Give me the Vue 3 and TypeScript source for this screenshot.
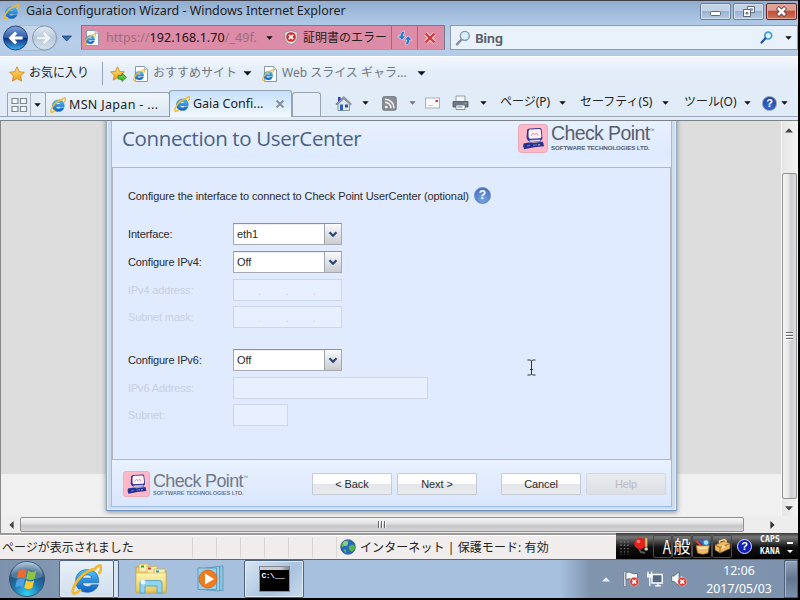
<script setup lang="ts">
import { ref } from 'vue'

interface Field {
  label: string
  kind: 'select' | 'ip' | 'text'
  value: string
  disabled: boolean
  size: string
}

const ipv4Fields = ref<Field[]>([
  { label: 'Interface:', kind: 'select', value: 'eth1', disabled: false, size: 'mid' },
  { label: 'Configure IPv4:', kind: 'select', value: 'Off', disabled: false, size: 'mid' },
  { label: 'IPv4 address:', kind: 'ip', value: '', disabled: true, size: 'mid' },
  { label: 'Subnet mask:', kind: 'ip', value: '', disabled: true, size: 'mid' },
])
const ipv6Fields = ref<Field[]>([
  { label: 'Configure IPv6:', kind: 'select', value: 'Off', disabled: false, size: 'mid' },
  { label: 'IPv6 Address:', kind: 'text', value: '', disabled: true, size: 'wide' },
  { label: 'Subnet:', kind: 'text', value: '', disabled: true, size: 'small' },
])
const groups = [ipv4Fields, ipv6Fields]
const zones = [0, 1, 2, 3, 4, 5]
</script>

<template>
  <div class="screen">
    <svg class="defs" width="0" height="0">
      <defs>
        <linearGradient id="gBlue" x1="0" y1="0" x2="0" y2="1">
          <stop offset="0" stop-color="#4fc0f5" /><stop offset="1" stop-color="#0f5fc0" />
        </linearGradient>
        <linearGradient id="gNav" x1="0" y1="0" x2="0" y2="1">
          <stop offset="0" stop-color="#7fa5d9" /><stop offset=".48" stop-color="#2e5cae" />
          <stop offset=".5" stop-color="#0b2c80" /><stop offset="1" stop-color="#3fb0ee" />
        </linearGradient>
        <linearGradient id="gFwd" x1="0" y1="0" x2="0" y2="1">
          <stop offset="0" stop-color="#e2ebf4" /><stop offset=".5" stop-color="#b9c9dc" />
          <stop offset="1" stop-color="#d6e2ee" />
        </linearGradient>
        <linearGradient id="gStar" x1="0" y1="0" x2="0" y2="1">
          <stop offset="0" stop-color="#ffe679" /><stop offset="1" stop-color="#f59a1a" />
        </linearGradient>
        <radialGradient id="gOrb" cx=".5" cy=".95" r=".9">
          <stop offset="0" stop-color="#35d3f5" /><stop offset=".45" stop-color="#1b78ae" />
          <stop offset=".75" stop-color="#28537f" /><stop offset="1" stop-color="#8fb2cc" />
        </radialGradient>
        <linearGradient id="gFolder" x1="0" y1="0" x2="0" y2="1">
          <stop offset="0" stop-color="#fdf3b0" /><stop offset="1" stop-color="#e8c95c" />
        </linearGradient>
      </defs>
      <symbol id="ie" viewBox="0 0 16 16">
        <path d="M14.300 9.700H6c.1 1.300 1 2 2.400 2 1 0 1.700-.4 2.200-1h3.500c-.9 2.500-3 3.900-5.700 3.900-3.700 0-6-2.300-6-5.800 0-3.600 2.400-5.900 6-5.900 4 0 6.200 2.700 5.900 6.800zM10.700 7.300C10.500 6.200 9.600 5.600 8.300 5.600s-2.100.6-2.400 1.700z" fill="url(#gBlue)" stroke="#0d58a8" stroke-width=".3" />
        <path d="M12.200 2.700C13.500.9 15.200.2 15.500 1.200c.3.900-.1 2.200-.9 3.500M12.200 2.500C8.200 3 3.400 7.300 1.500 11.800c-1 2.300-.7 3.600.4 3.400 1-.1 2-.9 2.800-1.600" fill="none" stroke="#f3b92c" stroke-width="1.400" stroke-linecap="round" />
      </symbol>
      <symbol id="page" viewBox="0 0 16 16">
        <path d="M2.500.5h9l3 3v12h-12z" fill="#fbfdff" stroke="#8b98a8" />
        <path d="M11.500.5v3h3" fill="#dbe4ed" stroke="#9aa6b4" stroke-width=".7" />
        <use href="#ie" x="0" y="3" width="12" height="12" />
      </symbol>
      <symbol id="star" viewBox="0 0 16 16">
        <path d="M8 .8l2.200 4.900 5.200.6-3.900 3.600 1.100 5.200L8 12.500l-4.600 2.600 1.100-5.200L.6 6.300l5.200-.6z" fill="url(#gStar)" stroke="#cf8a1c" stroke-width=".9" stroke-linejoin="round" />
      </symbol>
      <symbol id="down" viewBox="0 0 8 5"><path d="M0 .3h8L4 4.600z" fill="currentColor" /></symbol>
      <symbol id="badge" viewBox="0 0 8 8">
        <circle cx="4" cy="4" r="3.800" fill="#e23a32" stroke="#f8c6c0" stroke-width=".5" />
        <path d="M2.400 2.400l3.200 3.200M5.600 2.400L2.400 5.600" stroke="#fff" stroke-width="1.300" />
      </symbol>
      <symbol id="cp" viewBox="0 0 30 30">
        <rect x=".5" y=".5" width="29" height="28" rx="3" fill="#ffb8c8" stroke="#e5a9b6" />
        <path d="M9 6.500Q9 4.500 12 4.500L22 4q1.500 0 1.600 1.500L24.500 14q0 2-2 2.200L12 17q-2.500 0-2.700-1.500L8.500 14z" fill="#2c3599" />
        <path d="M10.500 7.500Q11 5 13.300 5.400l8.200-.5q1 0 1.200 1L23.500 12.500q0 1.700-1.500 1.800L12.800 14.800q-2 0-2.200-1.500z" fill="#fff3fa" />
        <path d="M13 12l2-3 1.500 2 2-2.200 1.500 3" fill="none" stroke="#d77da0" stroke-width=".8" />
        <path d="M11 16l11-.7 1 2-11 1z" fill="#ebe6f8" stroke="#2c3599" stroke-width=".6" />
        <path d="M5.500 19.500l5-1 5 .6 9.500-1.400 1 4.500-10 1-10 2q-1.500-3-.5-5.700z" fill="#253093" />
        <path d="M9 22l3-.5M15 21.300l4-.5" stroke="#8f9bd8" stroke-width=".8" />
        <path d="M20 21l2-.3" stroke="#e8d37b" />
      </symbol>
    </svg>

    <header class="titlebar">
      <svg class="i16"><use href="#ie" /></svg>
      <span class="title-text">Gaia Configuration Wizard - Windows Internet Explorer</span>
      <div class="winbtns">
        <button class="wb"><svg width="29" height="15"><rect x="9.500" y="7.500" width="10" height="4" rx="1" fill="#fff" stroke="#5c6b80" /></svg></button>
        <button class="wb"><svg width="29" height="15"><path d="M13.500 2.500h7v6h-7z" fill="#fff" stroke="#5c6b80" /><path d="M16 4.800h2.500v1.500H16z" fill="#a9bcd5" stroke="#5c6b80" stroke-width=".7" /><path d="M9.500 5.500h7v7h-7z" fill="#fff" stroke="#5c6b80" /><path d="M12 8.500h2v1.500h-2z" fill="#a9bcd5" stroke="#5c6b80" stroke-width=".8" /></svg></button>
        <button class="wb close"><svg width="29" height="15"><path d="M10.500 3.500l8 8M18.500 3.500l-8 8" stroke="#5d3434" stroke-width="4.200" /><path d="M11 4l7 7M18 4l-7 7" stroke="#fff" stroke-width="2.600" /></svg></button>
      </div>
    </header>

    <nav class="navbar">
      <svg class="navbtns" width="78" height="30" viewBox="0 0 78 30">
        <path d="M15 2.500h30a12.500 12.500 0 010 25H15z" fill="#c4d5e9" stroke="#a3b8d1" stroke-width=".8" />
        <circle cx="15.500" cy="15" r="12" fill="url(#gNav)" stroke="#2e4678" />
        <path d="M8.500 15l6.500-6.500 2.200 2.200-2.600 2.700h8v3.200h-8l2.600 2.700-2.200 2.200z" fill="#fff" />
        <circle cx="44.500" cy="15" r="12" fill="url(#gFwd)" stroke="#8597ad" />
        <path d="M51 15l-6.500-6.500-2.200 2.200 2.600 2.700h-8v3.200h8l-2.600 2.700 2.200 2.200z" fill="#edf3f8" stroke="#b3c1d0" stroke-width=".5" />
        <path d="M62 13h9.500l-4.800 5z" fill="#2b6fb5" stroke="#21406d" stroke-width=".8" />
      </svg>
      <div class="address">
        <svg class="page-ico"><use href="#page" /></svg>
        <span class="url">https://<b>192.168.1.70</b>/_49f.</span>
        <svg class="dn"><use href="#down" /></svg>
        <svg class="shield" viewBox="0 0 14 15"><path d="M7 .5l6.300 1.700V7c0 4-3 6.300-6.300 7.500C3.700 13.300.700 11 .700 7V2.200z" fill="#d9dde2" stroke="#8d8f98" stroke-width=".8" /><circle cx="7" cy="7" r="4.800" fill="#d52b2f" /><path d="M4.800 4.800l4.400 4.400M9.200 4.800L4.800 9.200" stroke="#fff" stroke-width="1.800" /></svg>
        <span class="cert">証明書のエラー</span>
        <span class="acell"><svg width="16" height="16" viewBox="0 0 16 16"><path d="M7.500 1Q3 1.500 3.200 6H.8l4 4.200L8.800 6H6.300Q6 3.800 7.500 3zM8.500 15q4.500-.5 4.300-5h2.400l-4-4.200L7.200 10h2.500q.3 2.200-1.200 3z" fill="#2f78d0" stroke="#e9f0fa" stroke-width=".6" /></svg></span>
        <span class="acell"><svg width="14" height="14" viewBox="0 0 14 14"><path d="M2.500 2.500l9 9M11.500 2.500l-9 9" stroke="#f5d3d5" stroke-width="4" /><path d="M2.500 2.500l9 9M11.500 2.500l-9 9" stroke="#cf3a3c" stroke-width="2.400" /></svg></span>
      </div>
      <div class="search">
        <svg width="16" height="16" viewBox="0 0 16 16"><path d="M6.500 9.500L2 14.300" stroke="#8c9199" stroke-width="2.500" stroke-linecap="round" /><circle cx="9.800" cy="5.800" r="4.500" fill="#d9eefb" stroke="#7f95ab" stroke-width="1.300" /></svg>
        <span class="bing">Bing</span>
        <svg class="mag" width="13" height="13" viewBox="0 0 13 13"><circle cx="8.200" cy="4.600" r="3.400" fill="#e6f6ff" stroke="#3d9bdc" stroke-width="1.700" /><path d="M5.500 7.300L1.500 11.500" stroke="#2450a0" stroke-width="2.200" stroke-linecap="round" /></svg>
        <svg class="dn"><use href="#down" /></svg>
      </div>
    </nav>

    <section class="chrome">
      <div class="favbar">
        <svg class="i16"><use href="#star" /></svg>
        <span class="fav-title">お気に入り</span>
        <i class="fav-sep"></i>
        <svg class="star2" width="17" height="16" viewBox="0 0 17 16"><use href="#star" width="15" height="15" /><path d="M8 9.500h4V7l4.500 4.300L12 15.500V13H8z" fill="#5ac63c" stroke="#28811d" stroke-width=".8" /></svg>
        <svg class="pg1"><use href="#page" /></svg>
        <span class="link l1">おすすめサイト</span>
        <svg class="dn big"><use href="#down" /></svg>
        <svg class="pg2"><use href="#page" /></svg>
        <span class="link l2">Web スライス ギャラ...</span>
        <svg class="dn big"><use href="#down" /></svg>
      </div>
      <div class="tabrow">
        <div class="quick">
          <svg width="22" height="20" viewBox="0 0 22 20"><path d="M4 3.500h6v5H4zM12.500 3.500h6v5h-6zM4 11.500h6v5H4zM12.500 11.500h6v5h-6z" fill="#f5f7f9" stroke="#7e8996" stroke-width="1.200" /></svg>
          <i></i>
          <svg class="dn sm"><use href="#down" /></svg>
        </div>
        <div class="tab"><svg class="i16"><use href="#ie" /></svg><span class="t1">MSN Japan - ...</span></div>
        <div class="tab active"><svg class="i16"><use href="#ie" /></svg><span class="t2">Gaia Confi...</span><svg class="tabx" width="10" height="10" viewBox="0 0 10 10"><path d="M1.500 1.500l7 7M8.500 1.500l-7 7" stroke="#87909c" stroke-width="2" /></svg></div>
        <div class="newtab"></div>
        <div class="cmds">
          <svg width="17" height="17" viewBox="0 0 17 17"><path d="M3 8.500l5.800-5 5.700 5v7H3z" fill="#dfe5ec" stroke="#77818e" stroke-width=".8" /><path d="M3 2h2.600v3L3 7.500z" fill="#2b3fc0" /><path d="M.8 9L8.800 1.500 16.500 9l-1.200.8-6.500-6-6.700 6z" fill="#93a0b2" stroke="#5d6979" stroke-width=".6" /><path d="M5 9.500h3v6H5z" fill="#2c63b8" /><path d="M10 9.500h3v3h-3z" fill="#2d4f9c" /></svg>
          <svg class="dn sm"><use href="#down" /></svg>
          <svg width="15" height="15" viewBox="0 0 15 15"><rect x=".7" y=".7" width="13.500" height="13.500" rx="1.500" fill="#8b8f95" stroke="#6f747b" /><path d="M3 6.300a6 6 0 016 6M3 3.200a9 9 0 019 9" fill="none" stroke="#f3f4f6" stroke-width="1.500" /><circle cx="4.300" cy="11" r="1.300" fill="#fff" /></svg>
          <svg class="dn sm dim"><use href="#down" /></svg>
          <svg width="15" height="12" viewBox="0 0 15 12"><rect x=".5" y="1" width="14" height="10" fill="#f9fafc" stroke="#a9afb8" /><path d="M10.500 3h2.500v2h-2.500z" fill="#d9352c" /><path d="M3 8.500h5" stroke="#c8ccd3" /></svg>
          <svg width="17" height="16" viewBox="0 0 17 16"><path d="M4 1h9v6H4z" fill="#f4f6f8" stroke="#838b95" stroke-width=".8" /><path d="M1 6.500h15v5.500H1z" fill="#6f7985" stroke="#4c545e" stroke-width=".8" /><path d="M4 10h9v4.500H4z" fill="#fff" stroke="#6c747e" stroke-width=".8" /><path d="M5.500 12h5" stroke="#4f80c4" /><path d="M12.500 8.200h2" stroke="#7cd168" /></svg>
          <svg class="dn sm"><use href="#down" /></svg>
          <span class="menu m1">ページ(P)</span><svg class="dn sm"><use href="#down" /></svg>
          <span class="menu m2">セーフティ(S)</span><svg class="dn sm"><use href="#down" /></svg>
          <span class="menu m3">ツール(O)</span><svg class="dn sm"><use href="#down" /></svg>
          <span class="qm">?</span><svg class="dn sm"><use href="#down" /></svg>
        </div>
      </div>
    </section>

    <main class="viewport">
      <div class="page">
        <div class="dialog">
          <div class="dlg-inner">
            <div class="dlg-head">
              <h1>Connection to UserCenter</h1>
              <div class="logo">
                <svg width="30" height="30"><use href="#cp" /></svg>
                <div class="logo-text"><span class="brand">Check Point<sup>™</sup></span><span class="tag">SOFTWARE TECHNOLOGIES LTD.</span></div>
              </div>
            </div>
            <div class="dlg-body">
              <p class="intro"><span>Configure the interface to connect to Check Point UserCenter (optional)</span><span class="hint">?</span></p>
              <div v-for="(g, gi) in groups" :key="gi" class="group">
                <div v-for="f in g.value" :key="f.label" class="row" :class="[f.kind, { off: f.disabled }]">
                  <label>{{ f.label }}</label>
                  <div class="ctl" :class="[f.size, f.kind]">
                    <span v-if="f.kind === 'select'" class="val">{{ f.value }}</span>
                    <span v-if="f.kind === 'select'" class="trigger"><svg width="10" height="7" viewBox="0 0 10 7"><path d="M1.500 1.300L5 4.800l3.500-3.500" fill="none" stroke="#27457e" stroke-width="2.200" /></svg></span>
                    <template v-if="f.kind === 'ip'"><i>.</i><i>.</i><i>.</i></template>
                  </div>
                </div>
              </div>
            </div>
            <div class="dlg-foot">
              <div class="logo faded">
                <svg width="27" height="27"><use href="#cp" /></svg>
                <div class="logo-text"><span class="brand">Check Point<sup>™</sup></span><span class="tag">SOFTWARE TECHNOLOGIES LTD.</span></div>
              </div>
              <div class="btns">
                <button>&lt; Back</button><button>Next &gt;</button><button class="cancel">Cancel</button><button class="disabled" disabled>Help</button>
              </div>
            </div>
          </div>
        </div>
        <svg class="caret" width="9" height="17" viewBox="0 0 9 17"><path d="M.5 1H3.500L4.500 2 5.500 1H8.500M4.500 2V15M.5 16H3.500L4.500 15 5.500 16H8.500M3 10.500h3" fill="none" stroke="#333" /></svg>
      </div>
      <div class="vscroll">
        <svg width="8" height="5" viewBox="0 0 8 5"><path d="M0 4.600L4 .3l4 4.300z" fill="#444" /></svg>
        <div class="vthumb"><i></i><i></i><i></i></div>
        <svg width="8" height="5" viewBox="0 0 8 5"><path d="M0 .3h8L4 4.600z" fill="#444" /></svg>
      </div>
    </main>

    <div class="hscroll">
      <svg width="5" height="8" viewBox="0 0 5 8"><path d="M4.600 0v8L.4 4z" fill="#444" /></svg>
      <div class="hthumb"><i></i><i></i><i></i></div>
      <svg width="5" height="8" viewBox="0 0 5 8"><path d="M.4 0v8L4.600 4z" fill="#333" /></svg>
    </div>

    <footer class="status">
      <span class="st-text">ページが表示されました</span>
      <span v-for="z in zones" :key="z" class="zone"></span>
      <span class="net">
        <svg width="16" height="16" viewBox="0 0 16 16"><circle cx="8" cy="8" r="7.300" fill="#2668c4" stroke="#2b4a78" stroke-width=".7" /><path d="M3 3.500Q6 .5 9 1.800L8 4 6.500 6.500 4 7 2 8.500 1.200 6zM9 7l3-1.500 3 1.500-.5 3-2.500 3-2-1.500-1.500-2zM3.500 10l2.500.8.5 2.500-1.500.7z" fill="#53b848" /><circle cx="5.500" cy="4.500" r="2.500" fill="#fff" opacity=".35" /></svg>
        <span class="net-text">インターネット | 保護モード: 有効</span>
      </span>
      <div class="ime">
        <svg class="grip" width="10" height="18" viewBox="0 0 10 18"><path d="M1 1v17M4.500 1v17M8 1v17" stroke="#777" stroke-dasharray="1.300 2" stroke-width="1.300" /></svg>
        <svg class="pen" width="18" height="20" viewBox="0 0 18 20"><circle cx="7" cy="7.500" r="5.700" fill="#e3211c" /><circle cx="5.500" cy="5.500" r="1.800" fill="#ff8073" /><path d="M12 2h2.500l-.3 9h-2z" fill="#e9c176" stroke="#8b6a35" stroke-width=".5" /><circle cx="13.200" cy="13" r="1.800" fill="#ccc" /><path d="M6 13l2 3 4 1" stroke="#555" stroke-width="2" fill="none" /></svg>
        <span class="key ka"><span>A</span></span><span class="key kj">般</span>
        <span class="key"><svg width="17" height="17" viewBox="0 0 17 17"><path d="M1 3l5 5 2-1-5-5z" fill="#e13b2c" /><path d="M4 2l5 5 2-1-4-5z" fill="#3268cf" /><circle cx="12" cy="4.500" r="3" fill="#a9dcf5" stroke="#377bb7" stroke-width="1.300" /><path d="M2 7.500h13.500L14 15q-5 2.500-10.500 0z" fill="#f0ba69" stroke="#94642c" stroke-width=".7" /><path d="M4 9.500q5 1.500 9.500 0" stroke="#fff0c9" stroke-width="1.500" fill="none" /></svg></span>
        <span class="key"><svg width="18" height="17" viewBox="0 0 18 17"><path d="M2 7l9-4 6 2.500v5L7 15l-5-3z" fill="#f0b963" stroke="#85602c" stroke-width=".7" /><path d="M2 7l5 2.500L17 5.500M7 9.500V15" stroke="#9b6c2a" fill="none" /><path d="M6.500 5V3L11 1.500l2 1V4" stroke="#f7d38b" stroke-width="1.500" fill="none" /><path d="M9 8l2.500-1v2.500L9 10.500z" fill="#fff0b8" /></svg></span>
        <span class="qm ime-q">?</span>
        <span class="caps"><span>CAPS</span><span>KANA</span></span>
        <svg class="imex" width="6" height="18" viewBox="0 0 6 18"><path d="M0 5h6v2H0zM0 13h6L3 16z" fill="#fff" /></svg>
      </div>
    </footer>

    <div class="taskbar">
      <div class="start">
        <svg width="38" height="38" viewBox="0 0 38 38"><circle cx="19" cy="19" r="17.500" fill="url(#gOrb)" stroke="#37536f" /><path d="M3.500 17a15.500 15.500 0 0131 0Q19 22 3.500 17z" fill="#fff" opacity=".2" /><path d="M10.500 11q4.500-2.800 8-.8L17 18q-4-1.700-8 .8z" fill="#ef6a2f" /><path d="M20 10.800q4 2.500 8.300.3L26.500 19q-4.300 2-8-.3z" fill="#8cc63f" /><path d="M8.700 20.300q4-2.500 8-.7L15 27q-4-1.800-7.800.5z" fill="#4f9fe3" /><path d="M18 20.200q4 2.300 8.200.3L24.300 28q-4.300 2-8-.3z" fill="#fcc92f" /></svg>
      </div>
      <div class="task ie"><svg width="31" height="31"><use href="#ie" /></svg></div><div class="stack"></div>
      <div class="pin p1">
        <svg width="34" height="32" viewBox="0 0 34 32"><path d="M2 4h11l1 2h8l1 2h9v20q0 2-2 2H4q-2 0-2-2z" fill="#eed577" stroke="#c6a43f" /><path d="M5 1h9v8H5z" fill="#f8edae" stroke="#c9ae53" stroke-width=".7" /><path d="M7 2.500h3v2H7z" fill="#25a83c" /><path d="M13 3.500h10v8H13z" fill="#f8edae" stroke="#c9ae53" stroke-width=".7" /><path d="M14 4.500h3v2h-3z" fill="#d83a32" /><path d="M20 6h11v8H20z" fill="#f8edae" stroke="#c9ae53" stroke-width=".7" /><path d="M22 7.500h3v2h-3z" fill="#2f8fd8" /><path d="M2 10h30v17q0 2-2 2H4q-2 0-2-2z" fill="url(#gFolder)" stroke="#cfae4d" stroke-width=".6" /><path d="M6 30V20q0-2.500 2.500-2.500h17q2.500 0 2.500 2.500v10h-5v-7H11v7z" fill="#8fd3ee" stroke="#4a9cc4" stroke-width=".8" /><circle cx="9" cy="19" r="2.500" fill="#fff" opacity=".8" /></svg>
      </div>
      <div class="pin p2">
        <svg width="30" height="28" viewBox="0 0 30 28"><path d="M12 3l14-2v24.500l-14-1z" fill="#8cc2dd" stroke="#4d8fb5" stroke-width=".7" /><path d="M9 3l13.500-1.500v24.500L9 25z" fill="#9bcde5" stroke="#4d8fb5" stroke-width=".7" /><path d="M1 3h18.500v21.500H1z" fill="#9ccfe9" stroke="#4d8fb5" stroke-width=".8" /><circle cx="11" cy="14" r="9" fill="#f07c20" stroke="#c85e15" stroke-width=".7" /><path d="M8 8.500v11l9-5.500z" fill="#fff" /></svg>
      </div>
      <div class="task cmd">
        <div class="console"><span class="console-bar"></span><span class="prompt">C:\<b>_</b></span></div>
      </div>
      <div class="tray">
        <svg class="up" width="8" height="5" viewBox="0 0 8 5"><path d="M0 4.600L4 .3l4 4.300z" fill="#e9eef4" /></svg>
        <svg class="flag" width="17" height="16" viewBox="0 0 17 16"><path d="M1 .5h1.800v15H1z" fill="#fff" stroke="#49586c" stroke-width=".5" /><path d="M3 1.500q3-1 5.500.5t6 .2v6.500q-3.500 1-6-.4T3 8.500z" fill="#f5f8fb" stroke="#49586c" stroke-width=".7" /><use href="#badge" x="6.500" y="6" width="9.500" height="9.500" /></svg>
        <svg class="lan" width="16" height="16" viewBox="0 0 16 16"><path d="M5 3.500h10.200v8.500H5z" fill="#546a84" stroke="#fff" stroke-width="1.400" /><path d="M8 14.700h6M11 12.500v2" stroke="#fff" stroke-width="1.400" /><path d="M1 .5v3M4.500.5v3M.5 3.500H5v2.500H.5zM2.800 6v9" fill="#e8edf2" stroke="#fff" stroke-width="1.200" /></svg>
        <svg class="vol" width="17" height="16" viewBox="0 0 17 16"><path d="M.7 5h2.500L8 .8v14L3.200 10.500H.7z" fill="#f7f9fb" stroke="#49586c" stroke-width=".7" /><path d="M10.500 5q1.500 2 0 5" stroke="#fff" fill="none" /><use href="#badge" x="6.500" y="6" width="9.500" height="9.500" /></svg>
        <div class="clock"><span>12:06</span><span>2017/05/03</span></div>
        <div class="peek"></div>
      </div>
    </div>
  </div>
</template>

<style>
body { margin: 0; background: #000; }
</style>

<style scoped>
* { box-sizing: border-box; }
.screen { width: 800px; height: 600px; overflow: hidden; display: flex; flex-direction: column; background: #000; font: 12px/14px "Noto Sans", "Noto Sans CJK JP", sans-serif; color: #222; position: relative; }
.defs { position: absolute; }
svg { display: block; flex: none; }
span { white-space: nowrap; }
button { padding: 0; margin: 0; font: inherit; }
.i16 { width: 16px; height: 16px; }
.dn { width: 7px; height: 4px; color: #111; }
.dn.big { width: 9px; height: 5px; }
.dn.sm { width: 7px; height: 4px; }
.dn.dim { color: #777; }

.titlebar { height: 22px; width: 798px; border-top: 1px solid #3f3e45; background: linear-gradient(#93add0, #adc8e5); display: flex; align-items: center; padding-left: 3px; flex: none; }
.title-text { margin-left: 7px; font-size: 12.500px; letter-spacing: -.04px; line-height: 14px; padding-bottom: 2px; }
.winbtns { margin-left: auto; display: flex; gap: 2px; padding-right: 1px; height: 18px; }
.wb { width: 31px; height: 17px; border: 1px solid #6c7f9b; border-radius: 2px; background: linear-gradient(#c2d2e5 45%, #9cb3d0 50%, #b7cce2); box-shadow: inset 0 0 0 1px #d3e0ef; }
.wb.close { border-color: #62232a; background: linear-gradient(#dba293 40%, #c24f3c 50%, #cf7357); box-shadow: inset 0 0 0 1px #e5a99c; }

.navbar { height: 34px; width: 798px; flex: none; display: flex; align-items: flex-start; background: linear-gradient(#adc8e5, #b9cfe9 60%, #b4cbe6); padding-top: 1px; }
.navbtns { margin-right: 3px; }
.address { margin-top: 2px; width: 364px; height: 25px; border: 1px solid #767988; border-bottom-color: #a998a8; background: #dc8ca6; display: flex; align-items: center; padding-left: 2px; flex: none; }
.page-ico { width: 16px; height: 16px; }
.url { margin-left: 6px; width: 154px; color: #9d6c7d; font-size: 12.500px; letter-spacing: .06px; }
.url b { font-weight: 400; color: #1b1015; }
.address .dn { margin-left: 6px; }
.shield { width: 14px; height: 15px; margin-left: 11px; }
.cert { margin-left: 5px; width: 88px; }
.acell { width: 26px; height: 23px; border-left: 1px solid #a3687c; display: flex; align-items: center; justify-content: center; }
.acell + .acell { width: 25px; }
.search { margin: 2px 0 0 5px; width: 348px; height: 25px; border: 1px solid #8d9bac; background: #e9f1fa; display: flex; align-items: center; padding-left: 4px; flex: none; }
.bing { margin-left: 4px; font-size: 12.800px; color: #59616c; font-weight: 500; text-shadow: .3px 0 #59616c; }
.mag { margin-left: auto; }
.search .dn { margin: 0 5px 0 12px; }

.chrome { height: 66px; width: 798px; flex: none; background: linear-gradient(#f2f7fd, #e2edf9 25%, #dfebf7); border-top: 1px solid #fff; border-bottom: 2px solid #7b8187; display: flex; flex-direction: column; }
.favbar { height: 33px; flex: none; display: flex; align-items: center; padding-left: 9px; }
.favbar span { position: relative; top: -1px; }
.fav-title { margin-left: 4px; width: 73px; }
.fav-sep { width: 1px; height: 23px; background: #98a4b3; margin-right: 7px; }
.pg1, .pg2 { width: 16px; height: 16px; margin-left: 6px; }
.pg2 { margin-left: 10px; }
.link { color: #71787f; margin-left: 4px; }
.l1 { width: 90px; }
.l2 { width: 135px; }
.tabrow { height: 27px; flex: none; display: flex; align-items: flex-end; padding-left: 7px; border-bottom: 1px solid #99a5b3; }
.quick { width: 39px; height: 24px; border: 1px solid #97a3b1; border-bottom: 0; border-radius: 2px 2px 0 0; background: #e4edf6; display: flex; align-items: center; }
.quick i { width: 1px; height: 23px; background: #a9b4c1; margin-right: 3px; }
.tab { height: 24px; width: 124px; border: 1px solid #97a3b1; border-left: 0; border-bottom: 0; border-radius: 0 3px 0 0; background: linear-gradient(#eef4fb, #dbe8f5); display: flex; align-items: center; padding-left: 4px; }
.tab span { margin-left: 3px; font-size: 12.500px; }
.tab .t1 { letter-spacing: .33px; }
.tab.active { height: 27px; width: 123px; border-left: 1px solid #8996a8; border-radius: 3px 3px 0 0; background: linear-gradient(#c5e0fb, #f2f8fe); margin-left: -1px; position: relative; top: 1px; }
.tabx { margin-left: auto; margin-right: 6px; }
.newtab { width: 29px; height: 24px; border: 1px solid #97a3b1; border-bottom: 0; border-radius: 3px 3px 0 0; background: #e4edf8; }
.cmds { align-self: center; display: grid; align-items: center; margin-left: 14px; height: 24px; grid-template-columns: 27px 20px 27px 16px 27px 28px 20px 59px 21px 82px 22px 60px 18px 19px 10px; }
.menu { line-height: 14px; padding-bottom: 2px; }
.cmds .dn { margin-bottom: 1px; }
.qm { width: 15px; height: 15px; border-radius: 50%; border: 1px solid #8f9bb0; background: radial-gradient(circle at 50% 70%, #3a6fda, #173990); color: #fff; font: bold 11px/13px "Liberation Sans", sans-serif; text-align: center; }

.viewport { height: 395px; width: 798px; flex: none; display: flex; border-left: 1px solid #888; background: #f0f0f0; margin-top: -1px; overflow: hidden; }
.page { width: 780px; height: 395px; background: linear-gradient(#ddd 353px, #f0f0f0 353px); overflow: hidden; position: relative; }
.dialog { margin: -10px 0 0 105px; width: 571px; height: 400px; border: 1px solid #92a8c9; border-bottom-color: #6a8fc4; background: #cfdcee; box-shadow: inset 0 0 0 1px #e7effa, 0 1px 5px #888; padding: 0 4px 4px; }
.dlg-inner { border: 1px solid #9dbce8; border-top: 0; background: #dfeaff; height: 395px; display: flex; flex-direction: column; }
.dlg-head { height: 55px; padding: 12px 0 0 10px; background: linear-gradient(#eaf2ff, #deeaff 80%, #e6efff); display: flex; align-items: flex-start; justify-content: space-between; flex: none; }
h1 { margin: -1px 0 0; font: 400 20.500px/30px "Open Sans", sans-serif; color: #4a6184; letter-spacing: -.37px; white-space: nowrap; }
.logo { display: flex; width: 153px; }
.logo-text { display: flex; flex-direction: column; margin-left: 3px; color: #56606d; }
.dlg-head .logo-text { margin-top: -1px; }
.brand { font: 19.500px/21px "Liberation Sans", sans-serif; letter-spacing: -.600px; }
.brand sup { font-size: 5px; vertical-align: 8px; line-height: 0; }
.tag { font: bold 6.200px/7px "Liberation Sans", sans-serif; letter-spacing: -.1px; }
.dlg-body { height: 293px; flex: none; border: 1px solid #b2b6bd; background: #e0ebff; padding: 16px 0 0 15px; font: 11px/14px "Liberation Sans", sans-serif; color: #2a2a2a; display: flex; flex-direction: column; letter-spacing: -.1px; }
.intro { margin: 0 0 16px; height: 23px; display: flex; align-items: center; }
.hint { width: 17px; height: 17px; margin-left: 5px; border-radius: 50%; background: radial-gradient(circle at 50% 75%, #7aa5e4, #3765b4); border: 1px solid #6b8cc4; color: #fff; font: bold 12px/15px "Liberation Sans", sans-serif; text-align: center; }
.group { display: flex; flex-direction: column; margin-bottom: 21px; }
.row { height: 22px; display: flex; align-items: center; margin-bottom: 6px; }
.row:nth-child(3) { margin-bottom: 5px; }
.group:nth-child(3) .row:nth-child(2) { margin-bottom: 5px; }
.group:nth-child(2) .row:nth-child(4) { margin-bottom: 0; }
.row label { width: 105px; letter-spacing: -.15px; }
.row.off label { color: #c8d0e0; }
.ctl { height: 22px; border: 1px solid #ccd6e8; background: #e8f0ff; display: flex; }
.mid { width: 109px; }
.wide { width: 195px; }
.small { width: 55px; }
.ctl.select { background: #fff; border-color: #a6aab0; border-top-color: #8f9297; box-shadow: inset 0 1px #eee; }
.val { width: 90px; padding-left: 3px; line-height: 20px; }
.trigger { width: 17px; border-left: 1px solid #9da3ac; background: linear-gradient(#fafafa, #dcdee1 60%, #c9cbcf); display: flex; align-items: center; justify-content: center; }
.ctl.ip { padding-left: 24px; gap: 24.500px; line-height: 22px; color: #c3ccdf; }
.ctl i { font-style: normal; width: 3px; }
.dlg-foot { flex: 1; display: flex; background: linear-gradient(#e9f1ff, #d9e6fc); padding: 11px 5px 0 11px; align-items: flex-start; justify-content: space-between; }
.faded { width: 150px; }
.faded .brand { font-size: 18px; line-height: 20px; color: #717a89; letter-spacing: -.65px; }
.faded .tag { font-size: 5.700px; color: #717a89; line-height: 5px; }
.btns { display: flex; gap: 5px; padding-top: 2px; }
.btns button { width: 80px; height: 22px; border: 1px solid #c4cbd6; background: linear-gradient(#fdfdfd 48%, #e3e5e9 52%, #e9ebee); font: 11px/18px "Liberation Sans", sans-serif; color: #2a2a2a; border-radius: 1px; letter-spacing: -.1px; }
.btns .cancel { margin-left: 19px; }
.btns .disabled { color: #b9bbc0; background: linear-gradient(#e9ebef, #dcdfe5); border-color: #d3d8e1; }
.caret { position: absolute; left: 526px; top: 238px; }

.vscroll { width: 17px; background: linear-gradient(90deg, #e5e5e5, #f3f3f3); display: flex; flex-direction: column; align-items: center; justify-content: space-between; padding: 7px 2px 5px 0; border-left: 1px solid #fafafa; }
.vthumb { width: 15px; height: 326px; margin-top: 40px; margin-bottom: auto; border: 1px solid #909090; border-radius: 2px; background: linear-gradient(90deg, #f5f5f5, #e8e8e9 40%, #cdcdd1 60%, #dcdcde); display: flex; flex-direction: column; gap: 1px; align-items: center; justify-content: center; }
.vthumb i { width: 7px; height: 2px; background: #666; border-bottom: 1px solid #fff; }
.hscroll { height: 17px; width: 798px; flex: none; display: flex; align-items: center; padding-left: 8px; background: #ededed; border-left: 1px solid #888; }
.hthumb { width: 724px; height: 15px; margin: 0 26px 0 6px; border: 1px solid #909090; border-radius: 2px; background: linear-gradient(#f5f5f5, #e3e3e3 40%, #c6c6ca 60%, #d6d6d9); display: flex; gap: 1px; align-items: center; justify-content: center; }
.hthumb i { width: 2px; height: 7px; background: #666; border-right: 1px solid #fff; }

.status { height: 26px; width: 798px; flex: none; border-top: 2px solid #9a9a9a; box-shadow: inset 0 1px #fff; background: #f0edec; display: flex; align-items: center; }
.st-text { width: 192px; padding: 2px 0 0 2px; }
.zone { width: 24px; height: 21px; border-left: 1px solid #d9d6d4; }
.net { width: 280px; height: 21px; border-left: 1px solid #d9d6d4; display: flex; align-items: center; padding-left: 3px; }
.net-text { margin-left: 4px; padding-top: 2px; letter-spacing: .08px; }
.ime { height: 26px; margin-top: -2px; width: 182px; background: linear-gradient(#3a3a3a, #777 4px, #111 55%, #000); color: #fff; display: flex; align-items: center; flex: none; padding-left: 4px; }
.grip { margin-right: 3px; }
.pen { width: 18px; margin-right: 2px; }
.key { width: 20px; height: 23px; border: 1px solid #4b4b4b; border-radius: 2px; display: flex; align-items: center; justify-content: center; flex: none; }
.ka { font: 18px/20px "Noto Sans CJK JP", sans-serif; justify-content: flex-end; width: 19px; }
.ka span { transform: scaleX(.75); transform-origin: right; }
.kj { font: 17px/20px "Noto Sans CJK JP", sans-serif; width: 20px; }
.ime-q { margin-left: 5px; background: #1420b8; border-color: #dfe3ff; flex: none; }
.caps { display: flex; flex-direction: column; font: bold 8px/12px "DejaVu Sans Mono", monospace; margin-left: 8px; width: 22px; letter-spacing: .2px; }
.imex { margin-left: 5px; }

.taskbar { height: 39px; width: 798px; flex: none; border-top: 1px solid #56687d; background: linear-gradient(90deg, #7d93ad 0, #8196b0 55px, #a6c0de 120px, #a6c0de 560px, #8094ae 590px, #7d92ac); display: flex; align-items: center; }
.start { width: 59px; padding-left: 8px; }
.task { height: 38px; border: 1px solid #4f647f; border-radius: 2px; box-shadow: inset 0 0 0 1px #e2ecf7; background: linear-gradient(#dbe7f4, #bfd1e6); display: flex; align-items: center; justify-content: center; }
.task.ie { width: 55px; background: linear-gradient(#e9f1f9, #d0deed); }
.stack { width: 5px; height: 38px; border: 1px solid #4f647f; border-left: 0; border-radius: 0 2px 2px 0; background: #d8e4f1; }
.p1 { margin-left: 15px; }
.p2 { margin-left: 29px; }
.cmd { width: 60px; margin-left: 17px; background: linear-gradient(135deg, #d9e5f2, #aac3df 60%, #cadbed); }
.console { width: 31px; height: 26px; border: 1px solid #878b91; background: #000; color: #fff; display: flex; flex-direction: column; }
.console-bar { height: 3px; background: linear-gradient(90deg, #c8ccd2 70%, #7f858d); }
.prompt { font: bold 8px/12px "Liberation Mono", monospace; padding-left: 2px; letter-spacing: -.5px; display: flex; }
.prompt b { transform: scaleX(2); transform-origin: left; margin-left: 1px; }
.tray { margin-left: auto; display: flex; align-items: center; color: #fff; height: 38px; }
.up { margin-right: 13px; }
.flag { margin-right: 7px; }
.lan { margin-right: 8px; }
.clock { margin-left: 6px; width: 90px; text-align: center; display: flex; flex-direction: column; font-size: 12.300px; line-height: 18px; padding-top: 1px; }
.peek { width: 14px; height: 38px; border: 1px solid #4d6078; box-shadow: inset 1px 1px #a9bacd; background: linear-gradient(#8fa3bb, #62768f 50%, #7c92ac); }
</style>
